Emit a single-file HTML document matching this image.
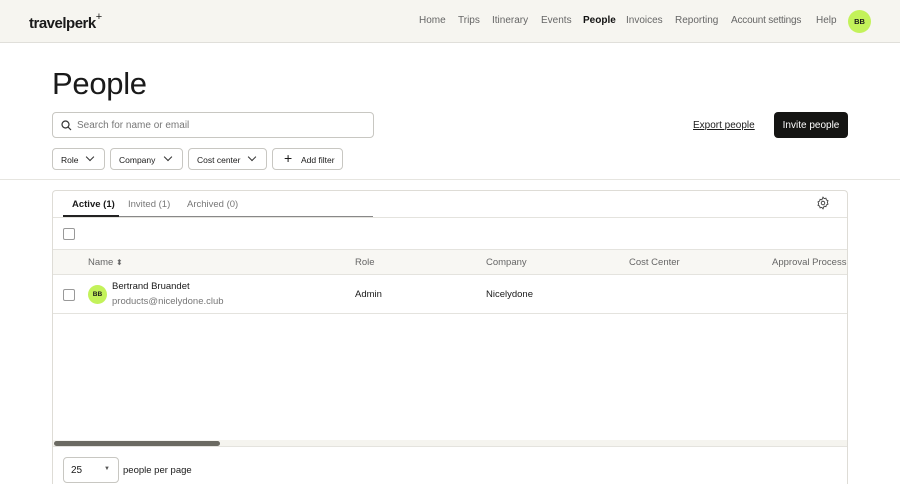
<!DOCTYPE html>
<html><head><meta charset="utf-8"><style>
*{box-sizing:border-box;margin:0;padding:0}
html,body{width:900px;height:484px;overflow:hidden}
body{background:#fff;font-family:"Liberation Sans",sans-serif;color:#1a1a1a;position:relative}
.nav{position:absolute;left:0;top:0;width:900px;height:43px;background:#f6f5f0;border-bottom:1px solid #e0dfda}
.logo{position:absolute;left:29px;top:13px;font-size:15px;font-weight:bold;letter-spacing:-0.5px;color:#1a1a1a}
.logo sup{font-size:11px;font-weight:normal;position:relative;top:-2px}
.nav a{position:absolute;top:15px;font-size:10px;color:#666;text-decoration:none;white-space:nowrap}
.av{position:absolute;left:848px;top:10px;width:23px;height:23px;border-radius:50%;background:#c3f25a;font-size:7.5px;font-weight:bold;text-align:center;line-height:23px}
h1{position:absolute;left:52px;top:66px;font-size:31px;font-weight:normal;letter-spacing:-0.3px}
.search{position:absolute;left:52px;top:112px;width:322px;height:26px;border:1px solid #c8c7c2;border-radius:4px;font-size:10px;color:#777;padding:7px 0 0 24px}
.btn{position:absolute;top:148px;height:22px;border:1px solid #c8c7c2;border-radius:4px;font-size:8.5px;padding:6px 0 0 8px}
.chev{position:absolute;right:11px;top:5px;width:6px;height:6px;border-right:1.5px solid #333;border-bottom:1.5px solid #333;transform:rotate(45deg)}
.export{position:absolute;left:693px;top:120px;font-size:10px;text-decoration:underline}
.invite{position:absolute;left:774px;top:112px;width:74px;height:26px;background:#151513;border-radius:4px;color:#fff;font-size:10px;display:flex;align-items:center;justify-content:center}
.sep{position:absolute;left:0;top:179px;width:900px;border-top:1px solid #e6e5e0}
.card{position:absolute;left:52px;top:190px;width:796px;height:294px;border:1px solid #dedcd6;border-bottom:none;border-radius:4px 4px 0 0;overflow:hidden}
.t{position:absolute;font-size:9.5px;white-space:nowrap}
.cb{position:absolute;width:12px;height:12px;border:1px solid #999;border-radius:2px;background:#fff}
.hl{position:absolute;left:0;width:796px;border-top:1px solid #e4e3de}
</style></head><body>
<div class="nav">
<div class="logo">travelperk<sup>+</sup></div>
<a style="left:419px">Home</a><a style="left:458px">Trips</a><a style="left:492px">Itinerary</a><a style="left:541px">Events</a><a style="left:583px;color:#111;font-weight:bold">People</a><a style="left:626px">Invoices</a><a style="left:675px">Reporting</a><a style="left:731px;letter-spacing:-0.2px">Account settings</a><a style="left:816px">Help</a>
<div class="av">BB</div>
</div>
<h1>People</h1>
<div class="search">Search for name or email
<svg style="position:absolute;left:8px;top:7px" width="11" height="11" viewBox="0 0 11 11"><circle cx="4.5" cy="4.5" r="3.5" fill="none" stroke="#333" stroke-width="1.2"/><path d="M7 7l3 3" stroke="#333" stroke-width="1.2"/></svg></div>
<div class="btn" style="left:52px;width:53px">Role<span class="chev"></span></div>
<div class="btn" style="left:110px;width:73px">Company<span class="chev"></span></div>
<div class="btn" style="left:188px;width:79px">Cost center<span class="chev"></span></div>
<div class="btn" style="left:272px;width:71px;padding-left:28px">Add filter<span style="position:absolute;left:11px;top:1px;font-size:14px">+</span></div>
<div class="export">Export people</div>
<div class="invite">Invite people</div>
<div class="sep"></div>
<div class="card">
<div class="t" style="left:19px;top:8px;font-weight:bold">Active (1)</div>
<div class="t" style="left:75px;top:8px;color:#777">Invited (1)</div>
<div class="t" style="left:134px;top:8px;color:#777">Archived (0)</div>
<div style="position:absolute;left:10px;top:25px;width:310px;border-top:1px solid #888"></div>
<div style="position:absolute;left:10px;top:24px;width:56px;border-top:2px solid #222"></div>
<svg style="position:absolute;left:763px;top:5px" width="14" height="14" viewBox="0 0 24 24" fill="none" stroke="#444" stroke-width="1.6"><circle cx="12" cy="12" r="3"/><path d="M12 2l2 2.5 3-.8.8 3 2.7 1.3-1 3 1 3-2.7 1.3-.8 3-3-.8L12 22l-2-2.5-3 .8-.8-3L3.5 16l1-3-1-3 2.7-1.3.8-3 3 .8z"/></svg>
<div class="hl" style="top:26px"></div>
<div class="cb" style="left:10px;top:37px"></div>
<div style="position:absolute;left:0;top:58px;width:796px;height:26px;background:#f8f7f3;border-top:1px solid #e4e3de;border-bottom:1px solid #e4e3de"></div>
<div class="t" style="left:35px;top:66px;color:#666">Name <span style="font-size:8px">⬍</span></div>
<div class="t" style="left:302px;top:66px;color:#666">Role</div>
<div class="t" style="left:433px;top:66px;color:#666">Company</div>
<div class="t" style="left:576px;top:66px;color:#666">Cost Center</div>
<div class="t" style="left:719px;top:66px;color:#666">Approval Process</div>
<div class="cb" style="left:10px;top:98px"></div>
<div style="position:absolute;left:35px;top:94px;width:19px;height:19px;border-radius:50%;background:#c3f25a;font-size:6.5px;font-weight:bold;text-align:center;line-height:19px">BB</div>
<div class="t" style="left:59px;top:90px">Bertrand Bruandet</div>
<div class="t" style="left:59px;top:105px;color:#777">products@nicelydone.club</div>
<div class="t" style="left:302px;top:98px">Admin</div>
<div class="t" style="left:433px;top:98px">Nicelydone</div>
<div class="hl" style="top:122px"></div>
<div style="position:absolute;left:0;top:249px;width:796px;height:7px;background:#f5f4ef;border-bottom:1px solid #e4e3de"></div>
<div style="position:absolute;left:1px;top:250px;width:166px;height:5px;background:#6b6a62;border-radius:3px"></div>
<div style="position:absolute;left:10px;top:266px;width:56px;height:26px;border:1px solid #c8c7c2;border-radius:4px;font-size:10px;padding:7px 0 0 7px">25<span style="position:absolute;left:40px;top:8px;font-size:6px;color:#555">▼</span></div>
<div class="t" style="left:70px;top:274px">people per page</div>
</div>
</body></html>
